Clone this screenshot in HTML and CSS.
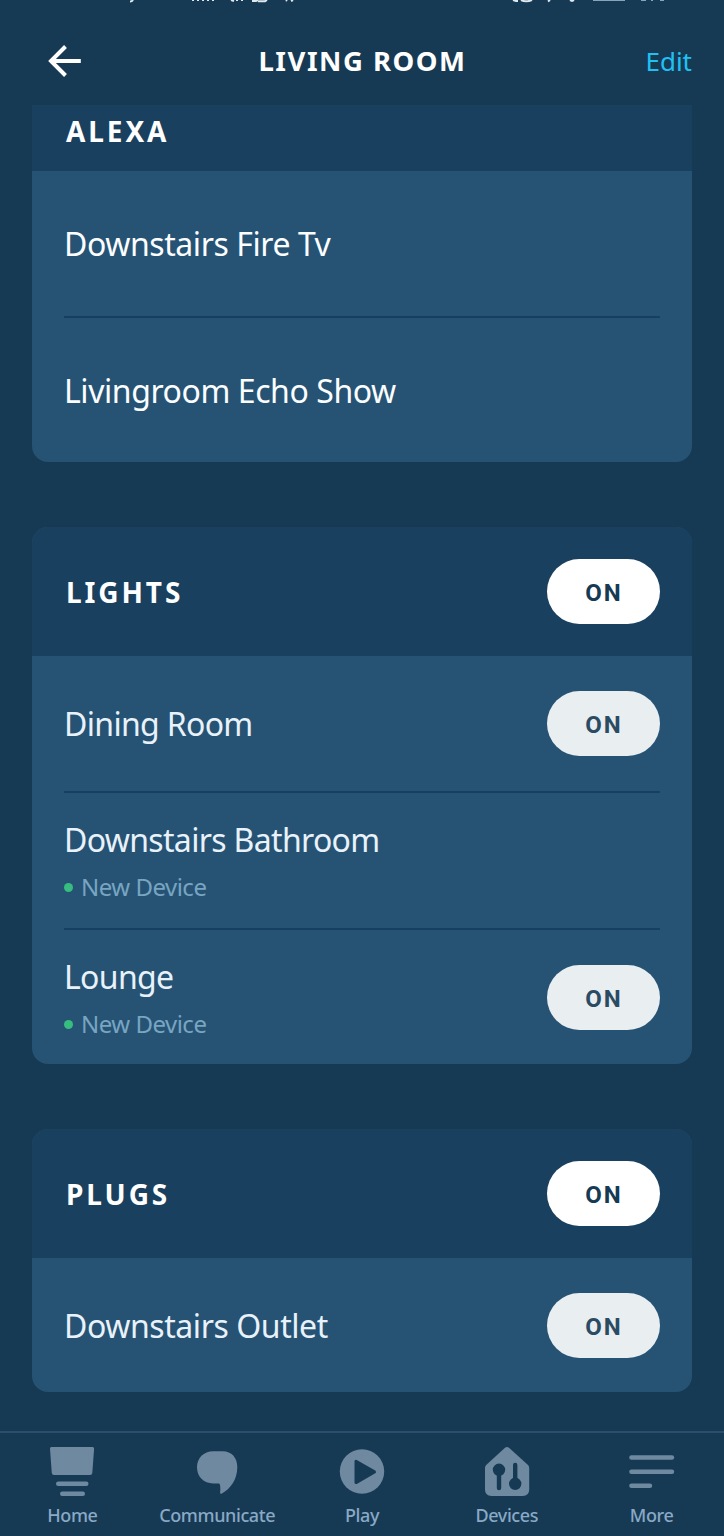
FILE: index.html
```
<!DOCTYPE html>
<html lang="en">
<head>
    <meta charset="UTF-8">
    <meta name="viewport" content="width=device-width, initial-scale=1.0">
    <title>Living Room</title>
    <link rel="stylesheet" href="styles.css">
</head>
<body>
    <div class="app">
        <header class="topbar">
            <!-- bottom edge of the phone status bar -->
            <svg class="status" width="724" height="4" viewBox="0 0 724 4">
                <path d="M130 1.600q2 0 3-1.600M193 0v1M198 0v1M203 0v1M208 0v1M213 0v1M231 0l3 1M237 0v1M242 0v1M252 1h4l2-1M258 1.200h7l2-1.200M286 0l1 1M291 1l2-1" fill="none" stroke="#dfe9ef" stroke-width="2"/>
                <path d="M513 0l3 1h2M521 0q5 2.500 11 0M548 1.500l2-1.500M570 0l2 1 2-1" fill="none" stroke="#dfe9ef" stroke-width="2"/>
                <path d="M593 0h32M641 0h5M651 0h2M660 0h4" stroke="#8ba5b8" stroke-width="1.800"/>
            </svg>
            <a class="back" href="#" aria-label="Back">
                <svg width="34" height="34" viewBox="0 0 34 34" fill="none" stroke="#fff" stroke-width="4">
                    <path d="M17.500 2.500 3 17l14.500 14.500M3 17h29.800"/>
                </svg>
            </a>
            <h1>LIVING ROOM</h1>
            <a class="edit" href="#">Edit</a>
        </header>

        <main class="groups">
            <section class="card card-cut">
                <div class="card-head"><h2>ALEXA</h2></div>
                <ul>
                    <li class="row tall bright"><span class="name">Downstairs Fire Tv</span></li>
                    <li class="row tall bright"><span class="name">Livingroom Echo Show</span></li>
                </ul>
            </section>

            <section class="card">
                <div class="card-head"><h2>LIGHTS</h2><button class="toggle">ON</button></div>
                <ul>
                    <li class="row"><span class="name tight">Dining Room</span><button class="toggle dim">ON</button></li>
                    <li class="row">
                        <div class="device">
                            <span class="name tight">Downstairs Bathroom</span>
                            <span class="note">New Device</span>
                        </div>
                    </li>
                    <li class="row">
                        <div class="device">
                            <span class="name tight">Lounge</span>
                            <span class="note">New Device</span>
                        </div>
                        <button class="toggle dim">ON</button>
                    </li>
                </ul>
            </section>

            <section class="card">
                <div class="card-head"><h2>PLUGS</h2><button class="toggle">ON</button></div>
                <ul>
                    <li class="row"><span class="name">Downstairs Outlet</span><button class="toggle dim">ON</button></li>
                </ul>
            </section>
        </main>

        <nav class="tabs">
            <a href="#">
                <svg width="48" height="52" viewBox="0 0 48 52" fill="currentColor">
                    <path d="M3.500 2h41q1.700 0 1.600 1.700l-1.800 24.300q-.2 2-2.200 2H6q-2 0-2.200-2L2 3.700Q1.800 2 3.500 2z"/>
                    <rect x="8" y="36.500" width="32.500" height="4.600" rx="2.300"/>
                    <rect x="12" y="46.600" width="25" height="4.400" rx="2.200"/>
                </svg>
                <span>Home</span>
            </a>
            <a href="#">
                <svg width="48" height="52" viewBox="0 0 48 52" fill="currentColor">
                    <path d="M20.300 6.200h9.500C38.500 6.200 44.300 12.500 44.300 22c0 12.500-6.800 21.800-15.500 26.600-1 .5-1.800 0-1.700-1.100.4-2.800.3-5.500-.2-7.900-.2-.9-.7-1.200-1.600-1.200h-5C10.500 38.400 4 31.500 4 22.300 4 13 10.500 6.200 20.300 6.200z"/>
                </svg>
                <span>Communicate</span>
            </a>
            <a href="#">
                <svg width="48" height="52" viewBox="0 0 48 52">
                    <circle cx="24" cy="26.500" r="22.200" fill="currentColor"/>
                    <path d="M18 16.200v21.400L36.500 26.900z" fill="#173a54" stroke="#173a54" stroke-width="3" stroke-linejoin="round"/>
                </svg>
                <span>Play</span>
            </a>
            <a href="#">
                <svg width="48" height="52" viewBox="0 0 48 52">
                    <path d="M22.300 2.600q1.700-1.400 3.400 0L45 20q1.200 1.200 1.200 3v21.500q0 6.500-6.500 6.500H8.500Q2 51 2 44.500V23q0-1.800 1.200-3z" fill="currentColor"/>
                    <g fill="#173a54" stroke="#173a54" stroke-width="4.400" stroke-linecap="round">
                        <circle cx="16" cy="24.800" r="4"/>
                        <path d="M16 25v18M32.200 38V20"/>
                        <circle cx="32.200" cy="38.800" r="4"/>
                    </g>
                </svg>
                <span>Devices</span>
            </a>
            <a href="#">
                <svg width="48" height="52" viewBox="0 0 48 52" fill="currentColor">
                    <rect x="1.200" y="10.200" width="45" height="4.600" rx="2.300"/>
                    <rect x="1.200" y="24.400" width="45" height="4.600" rx="2.300"/>
                    <rect x="1.200" y="38.500" width="23" height="4.600" rx="2.300"/>
                </svg>
                <span>More</span>
            </a>
        </nav>
    </div>
</body>
</html>
```
FILE: styles.css
```
* {
    box-sizing: border-box;
}
body {
    margin: 0;
    background-color: #173a54;
    color: #fff;
    font-family: "Noto Sans", sans-serif;
}
h1, h2, ul {
    margin: 0;
    padding: 0;
}
a {
    color: inherit;
    text-decoration: none;
}
.app {
    height: 1536px;
    display: flex;
    flex-direction: column;
    overflow: hidden;
}
.topbar {
    position: relative;
    height: 105px;
    padding: 17px 32px 0 48px;
    display: grid;
    grid-template-columns: 84px 1fr 100px;
    align-items: center;
    flex-shrink: 0;
}
.status {
    position: absolute;
    top: 0;
    left: 0;
}
.back svg {
    display: block;
}
h1 {
    padding-left: 1px;
    font-size: 27.500px;
    line-height: 40px;
    letter-spacing: 1.500px;
    text-align: center;
    white-space: nowrap;
}
.edit {
    color: #20c0f3;
    font-size: 26px;
    line-height: 40px;
    text-align: right;
}
.groups {
    flex: 1;
    padding: 0 32px;
    display: flex;
    flex-direction: column;
    gap: 65px;
}
.card {
    border-radius: 16px;
    background-color: #265374;
    overflow: hidden;
    flex-shrink: 0;
}
.card-head {
    height: 129px;
    padding: 0 32px 0 34px;
    display: flex;
    align-items: center;
    justify-content: space-between;
    background-color: #1a4060;
}
.card-cut {
    border-top-left-radius: 0;
    border-top-right-radius: 0;
}
.card-cut .card-head {
    height: 66px;
    padding-bottom: 14px;
}
h2 {
    font-size: 28px;
    line-height: 40px;
    letter-spacing: 2.9px;
}
ul {
    list-style: none;
    padding: 0 32px;
}
.row {
    height: 137px;
    display: flex;
    align-items: center;
    justify-content: space-between;
    border-bottom: 2px solid #173f5f;
    color: #e9f2fa;
}
.row:last-child {
    height: 134px;
    padding-top: 1px;
    border-bottom: none;
}
.row.tall {
    height: 147px;
}
.row.tall:last-child {
    height: 144px;
    padding-top: 2px;
}
.row.bright {
    color: #fbfdff;
}
.name {
    font-size: 32px;
    line-height: 44px;
    letter-spacing: -0.43px;
    white-space: nowrap;
}
.name.tight {
    letter-spacing: -0.67px;
}
.device {
    display: flex;
    flex-direction: column;
    gap: 9px;
}
.note {
    display: flex;
    align-items: center;
    gap: 8px;
    color: #78a5c1;
    font-size: 24px;
    line-height: 32px;
    letter-spacing: -0.5px;
}
.note::before {
    content: "";
    width: 9px;
    height: 9px;
    border-radius: 50%;
    background-color: #36bd80;
}
.toggle {
    width: 113px;
    height: 65px;
    padding: 2px 0 0 1px;
    border: none;
    border-radius: 33px;
    background-color: #fff;
    color: #173a54;
    font: bold 24px Roboto, sans-serif;
    letter-spacing: 2px;
}
.toggle.dim {
    background-color: #e9eef1;
    color: #2b4b63;
}
.tabs {
    height: 105px;
    padding-top: 12px;
    display: grid;
    grid-template-columns: repeat(5, 1fr);
    border-top: 2px solid #2a4f6c;
    color: #6f89a1;
    flex-shrink: 0;
}
.tabs a {
    display: flex;
    flex-direction: column;
    align-items: center;
}
.tabs span {
    margin-top: 5px;
    color: #89a9c6;
    font-size: 18px;
    font-weight: 500;
    line-height: 26px;
    letter-spacing: -0.4px;
}
```
